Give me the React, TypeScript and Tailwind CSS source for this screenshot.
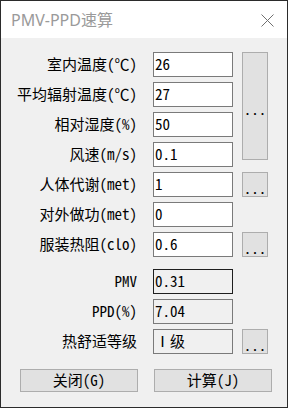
import React from "react";

const F = '"Noto Sans Mono CJK SC", "Noto Sans CJK SC", "Noto Sans", sans-serif';

function Label({ children }: { children: React.ReactNode }) {
  return (
    <div className="h-[24px] flex items-center justify-end pr-[16px] text-[15px] text-black whitespace-nowrap">
      {children}
    </div>
  );
}

function Input({ value, ro, dark }: { value: string; ro?: boolean; dark?: boolean }) {
  return (
    <div
      className={
        "w-[80px] h-[25px] border flex items-center pl-[1px] text-[15px] text-black " +
        (ro ? "bg-[#f0f0f0] " : "bg-white ") +
        (dark ? "border-[#1e1e1e]" : "border-[#7a7a7a]")
      }
    >
      {value}
    </div>
  );
}

function Dots({ tall }: { tall?: boolean }) {
  return (
    <div
      className={
        "w-[26px] border border-[#adadad] bg-[#e1e1e1] flex items-center justify-center text-[15px] leading-none pt-[5px] " +
        (tall ? "h-[108px] row-span-4 self-start" : "h-[25px]")
      }
    >
      ...
    </div>
  );
}

export default function App() {
  return (
    <div
      className="w-[288px] h-[408px] border border-[#2b2b2b] bg-[#f0f0f0] flex flex-col"
      style={{ fontFamily: F }}
    >
      <div className="h-[37px] bg-white flex items-center justify-between pl-[10px] pr-[13px] shrink-0">
        <span
          className="text-[16px] text-[#9a9a9a] pt-[1px]"
          style={{ fontFamily: '"Noto Sans", "Noto Sans CJK SC", sans-serif' }}
        >
          PMV-PPD速算
        </span>
        <svg width="13" height="13" viewBox="0 0 13 13" className="mt-[1px]">
          <path d="M0.5 0.5 L12.5 12.5 M12.5 0.5 L0.5 12.5" stroke="#707070" strokeWidth="1" fill="none" />
        </svg>
      </div>

      <div className="grid grid-cols-[152px_89px_26px] gap-y-[5px] mt-[14px] items-center">
        <Label>室内温度(℃)</Label>
        <Input value="26" />
        <Dots tall />
        <Label>平均辐射温度(℃)</Label>
        <Input value="27" />
        <Label>相对湿度(%)</Label>
        <Input value="50" />
        <Label>风速(m/s)</Label>
        <Input value="0.1" />
        <Label>人体代谢(met)</Label>
        <Input value="1" />
        <Dots />
        <Label>对外做功(met)</Label>
        <Input value="0" />
        <div />
        <Label>服装热阻(clo)</Label>
        <Input value="0.6" />
        <Dots />
      </div>

      <div className="grid grid-cols-[152px_89px_26px] gap-y-[5px] mt-[12px] items-center">
        <Label>PMV</Label>
        <Input value="0.31" ro dark />
        <div />
        <Label>PPD(%)</Label>
        <Input value="7.04" ro />
        <div />
        <Label>热舒适等级</Label>
        <Input value="Ⅰ级" ro />
        <Dots />
      </div>

      <div className="flex pl-[19px] gap-[16px] mt-[15px]">
        <div className="w-[118px] h-[23px] border border-[#adadad] bg-[#e1e1e1] flex items-center justify-center text-[15px]">
          关闭(G)
        </div>
        <div className="w-[118px] h-[23px] border border-[#adadad] bg-[#e1e1e1] flex items-center justify-center text-[15px]">
          计算(J)
        </div>
      </div>
    </div>
  );
}
